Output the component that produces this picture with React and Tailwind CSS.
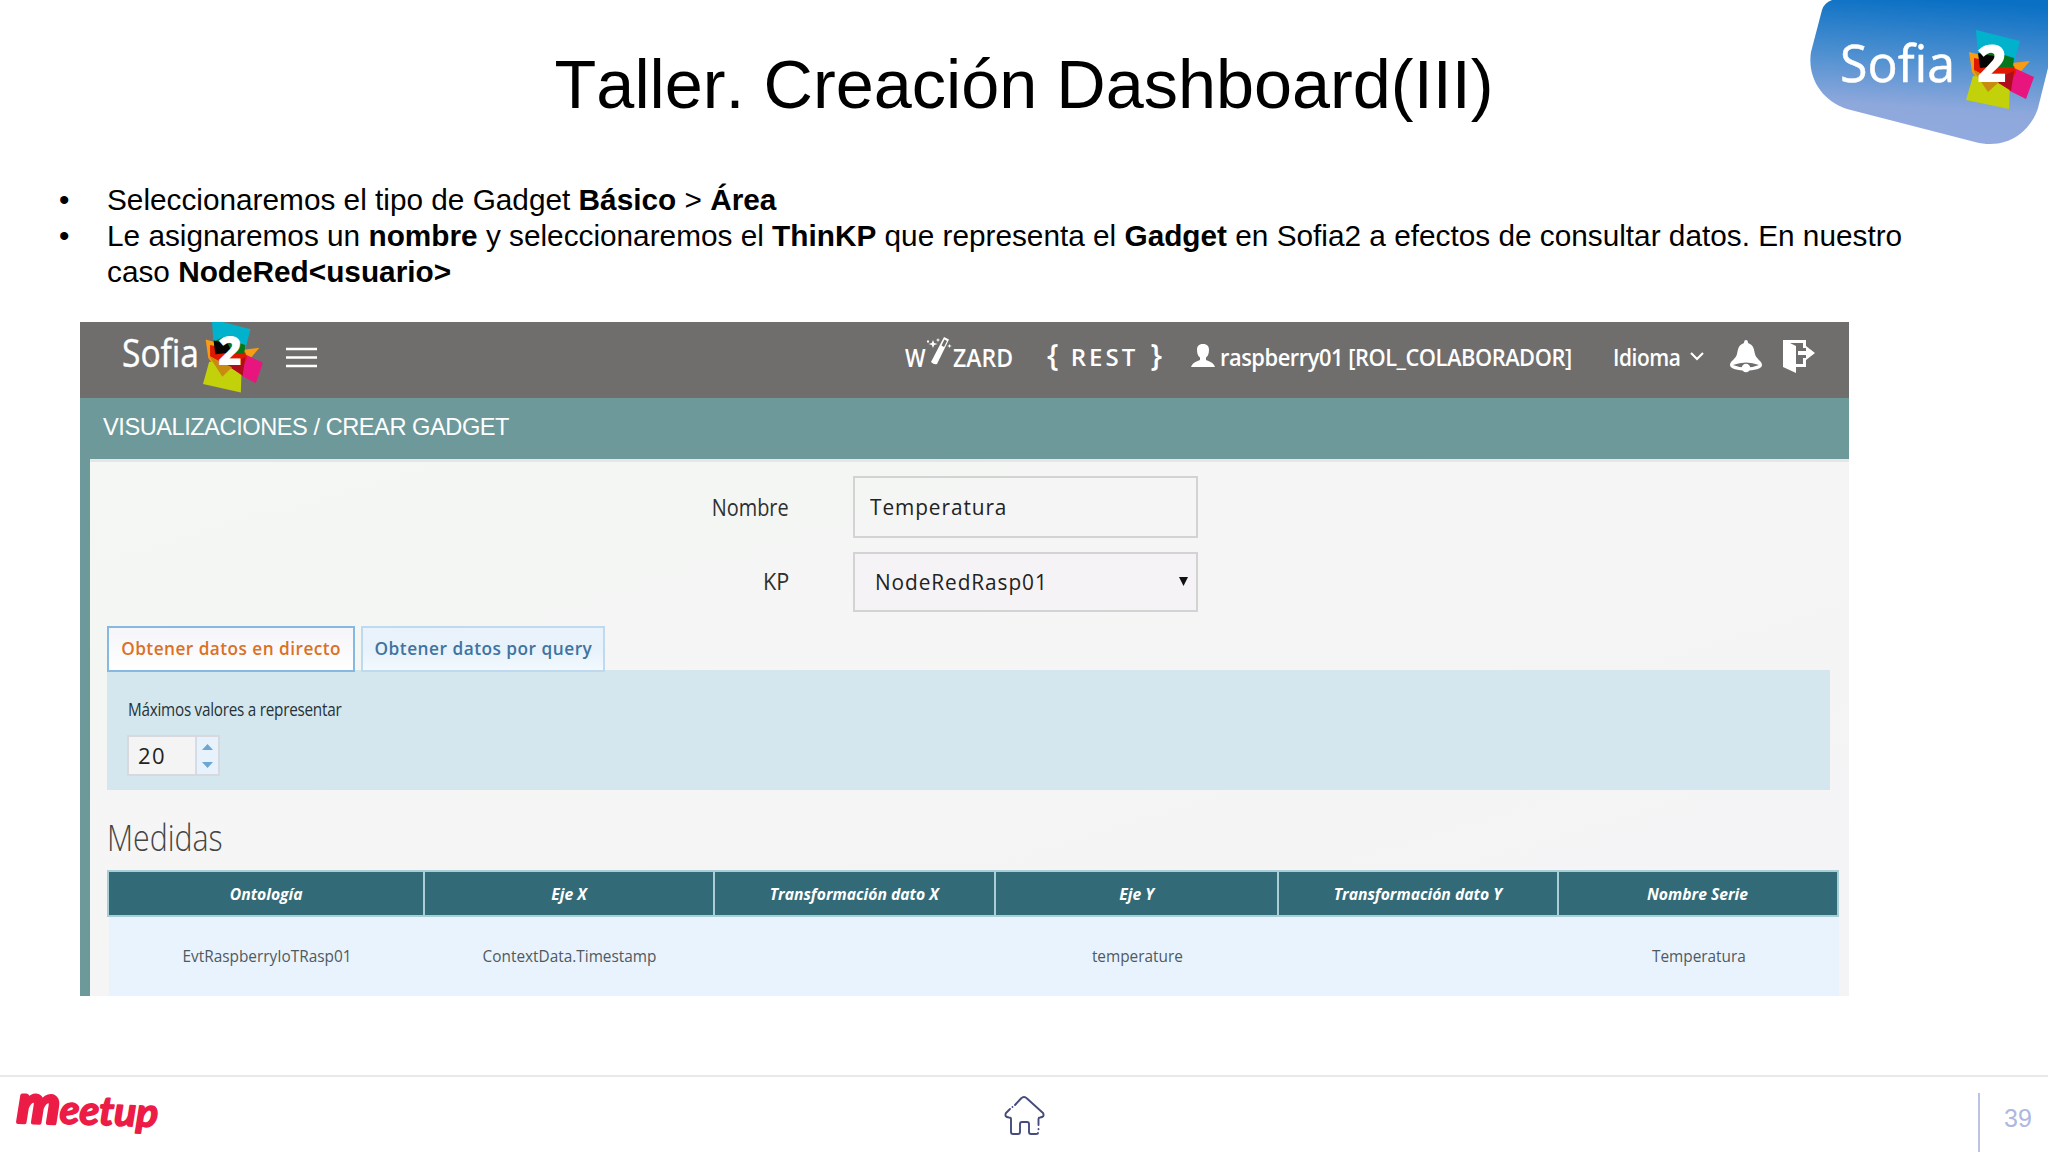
const columns = [
  { title: 'Ontología', value: 'EvtRaspberryIoTRasp01', width: 'w-[316px]' },
  { title: 'Eje X', value: 'ContextData.Timestamp', width: 'w-[290px]' },
  { title: 'Transformación dato X', value: '', width: 'w-[281px]' },
  { title: 'Eje Y', value: 'temperature', width: 'w-[283px]' },
  { title: 'Transformación dato Y', value: '', width: 'w-[280px]' },
  { title: 'Nombre Serie', value: 'Temperatura', width: 'w-[280px]' },
];

// Overlapping coloured sheets behind the "2"
function Sheets() {
  return (
    <g>
      <path d="M10 0 L54 11 L47 36 L12 27 Z" fill="#00b2cc" />
      <path d="M3 22 L46 33 L64 31 L50 47 L22 62 L6 42 Z" fill="#f79c14" />
      <path d="M46 37 L68 47 L60 69 L36 57 Z" fill="#e8157f" />
      <path d="M7 46 L44 49 L43 79 L0 70 Z" fill="#c3d10b" />
      <path d="M8 28 L48 36 L50 42 L42 58 L8 40 Z" fill="#e01800" />
      <path d="M28 50 L48 41 L45 61 Z" fill="#b00d1c" />
      <path d="M7 40 L33 52 L22 62 Z" fill="#c98a10" />
      <path d="M13 24 L22 20 L48 28 L47 37 L16 37 Z" fill="#05761c" />
      <path d="M12 23 L28 26 L33 36 L14 38 Z" fill="#060503" />
    </g>
  );
}

function CornerLogo() {
  return (
    <svg width="238" height="146" viewBox="0 0 238 146" className="absolute right-0 top-0">
      <defs>
        <linearGradient id="corner" x1="0.55" y1="0" x2="0.45" y2="1">
          <stop offset="0" stopColor="#0a70c4" />
          <stop offset="0.4" stopColor="#4c8fd0" />
          <stop offset="0.75" stopColor="#8ea8dc" />
          <stop offset="1" stopColor="#92aadf" />
        </linearGradient>
      </defs>
      <path d="M22 0 Q14 3 12 10 L1 52 C-3 78 12 101 37 109 L165 142 C200 151 222 128 228 108 L238 68 V0 Z" fill="url(#corner)" />
      <text x="30" y="82" textLength="115" lengthAdjust="spacingAndGlyphs" fontSize="52" fill="#fff" stroke="#fff" strokeWidth=".5" fontFamily="'Open Sans', sans-serif">Sofia</text>
      <g transform="translate(156 30)">
        <Sheets />
      </g>
      <text x="167" y="82" textLength="30" lengthAdjust="spacingAndGlyphs" fontSize="52" fontWeight="800" fill="#fff" fontFamily="'Open Sans', sans-serif">2</text>
    </svg>
  );
}

function AppLogo() {
  return (
    <svg width="150" height="76" viewBox="0 0 150 76" className="shrink-0">
      <text x="0" y="45" textLength="77" lengthAdjust="spacingAndGlyphs" fontSize="39" fill="#fff" stroke="#fff" strokeWidth=".4" fontFamily="'Open Sans', sans-serif">Sofia</text>
      <g transform="translate(81 -3) scale(.88 .93)">
        <Sheets />
      </g>
      <text x="96" y="43" textLength="24" lengthAdjust="spacingAndGlyphs" fontSize="40" fontWeight="800" fill="#fff" fontFamily="'Open Sans', sans-serif">2</text>
    </svg>
  );
}

function Wand() {
  return (
    <svg width="27" height="30" viewBox="0 0 27 30" className="shrink-0">
      <path d="M18 1 L23 3.5 L11 28 Q8 29 5 26 Z" fill="#fff" />
      <path d="M18.4 3.5 L21 5 L18 11 L15.5 9.5 Z" fill="#6f6e6d" />
      <path d="M7 4 L8.2 7 L11.5 8 L8.2 9 L7 12 L5.8 9 L2.5 8 L5.8 7 Z M12 2 L12.6 3.5 L14.3 4 L12.6 4.6 L12 6.2 L11.4 4.6 L9.7 4 L11.4 3.5 Z M1 4.5 h2 v2 h-2 Z M23.5 8 L24.2 9.5 L26 10 L24.2 10.5 L23.5 12 L22.8 10.5 L21 10 L22.8 9.5 Z" fill="#fff" />
    </svg>
  );
}

function TopBar() {
  return (
    <div className="flex h-[76px] items-start bg-[#6f6e6d] pl-[42px] text-white">
      <AppLogo />
      <svg width="31" height="22" viewBox="0 0 31 22" className="ml-[14px] mt-[25px] shrink-0" stroke="#fff" strokeWidth="2.6">
        <path d="M0 2H31M0 10.5H31M0 19H31" />
      </svg>
      <div className="ml-[588px] mt-[15px] flex h-10 w-[109px] shrink-0 items-start">
        <span className="w-[21px] origin-left scale-x-[.87] text-[25px] font-semibold leading-10">W</span>
        <div className="-mt-px">
          <Wand />
        </div>
        <span className="w-[61px] origin-left scale-x-[.92] text-[25px] font-semibold leading-10">ZARD</span>
      </div>
      <div className="ml-[33px] mt-[15px] flex h-10 w-[115px] shrink-0 justify-between">
        <span className="text-[30px] font-semibold leading-9">{'{'}</span>
        <span className="text-[24px] font-semibold leading-10 tracking-[3px]">REST</span>
        <span className="text-[30px] font-semibold leading-9">{'}'}</span>
      </div>
      <svg width="26" height="25" viewBox="0 0 26 25" className="ml-[28px] mt-[21px] shrink-0" fill="#fff">
        <path d="M13 1 C17.5 1 19 3.5 19 7 C19 11 17.5 13.5 16 14.5 V17 Q24 19.5 25 24 H1 Q2 19.5 10 17 V14.5 C8.5 13.5 7 11 7 7 C7 3.5 8.5 1 13 1 Z" />
      </svg>
      <div className="ml-[4px] mt-[15px] h-10 w-[352px] shrink-0">
        <span className="inline-block origin-left scale-x-[.91] whitespace-nowrap text-[24px] font-semibold leading-10 tracking-[-0.5px]">raspberry01 [ROL_COLABORADOR]</span>
      </div>
      <div className="ml-[41px] mt-[15px] h-10 w-[68px] shrink-0">
        <span className="inline-block origin-left scale-x-[.87] text-[24px] font-semibold leading-10 tracking-[-0.5px]">Idioma</span>
      </div>
      <svg width="14" height="9" viewBox="0 0 14 9" className="ml-[9px] mt-[30px] shrink-0" fill="none" stroke="#fff" strokeWidth="2.2">
        <path d="M1 1 L7 7 L13 1" />
      </svg>
      <svg width="34" height="33" viewBox="0 0 34 33" className="ml-[25px] mt-[18px] shrink-0">
        <path d="M17 0 Q19 0 19 3 C25 5 25 10 26 14 C27 19 33 21 33 25 C33 29 25 30.5 17 30.5 C9 30.5 1 29 1 25 C1 21 7 19 8 14 C9 10 9 5 15 3 Q15 0 17 0 Z" fill="#fff" />
        <path d="M4 25 Q17 20 30 25 Q17 30 4 25 Z" fill="#6f6e6d" />
        <circle cx="17" cy="28" r="4.2" fill="#fff" />
      </svg>
      <svg width="34" height="33" viewBox="0 0 34 33" className="ml-[19px] mt-[18px] shrink-0" fill="#fff">
        <path d="M1 0 H24 V8 H21 V3 H8 L14 6 V24 H21 V18 H24 V27 H14 V33 L1 27 Z" />
        <path d="M16 11 H24 V6 L33 13 L24 20 V15 H16 Z" />
      </svg>
    </div>
  );
}

function GadgetForm() {
  return (
    <div className="flex flex-col gap-[14px] pt-[14px] text-[#303030]">
      <div className="flex h-[62px] items-center">
        <div className="w-[699px] pb-px text-right">
          <span className="inline-block origin-right scale-x-[.83] text-[24px] leading-8">Nombre</span>
        </div>
        <div className="ml-[64px] flex h-[62px] w-[345px] items-center border-2 border-[#d2d3d2] pl-[15px] text-[22.5px] tracking-[1px] text-[#222]">
          <span className="inline-block origin-left scale-x-[.925]">Temperatura</span>
        </div>
      </div>
      <div className="flex h-[60px] items-center">
        <div className="w-[699px] pb-[3px] text-right">
          <span className="inline-block origin-right scale-x-[.9] text-[24px] leading-8">KP</span>
        </div>
        <div className="ml-[64px] flex h-[60px] w-[345px] items-center justify-between border-2 border-[#d2d3d2] bg-[#f5f3f5] pb-px pl-[20px] pr-[8px] text-[22.5px] tracking-[1px] text-[#222]">
          <span className="inline-block origin-left scale-x-[.925]">NodeRedRasp01</span>
          <svg width="9" height="9" viewBox="0 0 9 9">
            <path d="M0 0H9L4.5 9Z" fill="#111" />
          </svg>
        </div>
      </div>
    </div>
  );
}

function LiveData() {
  return (
    <div className="mt-[14px]">
      <div className="relative flex h-[44px] gap-[6px]">
        <div className="flex h-[46px] w-[248px] items-center justify-center border-2 border-[#86b9e2] bg-gradient-to-b from-[#f5f5fa] to-white pb-[2px] text-[18px] font-semibold tracking-[.5px] text-[#dc7024]">
          <span className="inline-block scale-x-[.955] whitespace-nowrap">Obtener datos en directo</span>
        </div>
        <div className="flex h-[46px] w-[244px] items-center justify-center border-2 border-[#bfdaee] bg-gradient-to-b from-[#eaf3fb] via-[#e8f2fb] to-[#f2f9ff] pb-[2px] text-[18px] font-semibold tracking-[.5px] text-[#3f73a1]">
          <span className="inline-block scale-x-[.96] whitespace-nowrap">Obtener datos por query</span>
        </div>
      </div>
      <div className="h-[120px] w-[1723px] bg-[#d4e7ee] pl-[20px] pt-[27px]">
        <p className="ml-px w-[400px] origin-left scale-x-[.825] text-[18.5px] leading-6 tracking-[-0.3px] text-[#253238]">Máximos valores a representar</p>
        <div className="mt-[14px] flex h-[41px] w-[93px] border-2 border-[#d8d9df] bg-[#f5f4f5]">
          <div className="flex w-[66px] items-center pb-px pl-[9px] text-[22px] tracking-[1.5px] text-[#222]">20</div>
          <div className="flex flex-1 flex-col items-center justify-center gap-[12px] border-l-2 border-[#d5dce8] bg-[#e8f2fd]">
            <svg width="11" height="6" viewBox="0 0 11 6"><path d="M0 6L5.5 0L11 6Z" fill="#6da6d3" /></svg>
            <svg width="11" height="6" viewBox="0 0 11 6"><path d="M0 0H11L5.5 6Z" fill="#6da6d3" /></svg>
          </div>
        </div>
      </div>
    </div>
  );
}

function Measures() {
  return (
    <div>
      <h2 className="mt-[22px] h-[58px] w-[200px] origin-left scale-x-[.84] text-[36px] font-light leading-[52px] text-[#444]">Medidas</h2>
      <div className="flex w-[1731px]">
        <div className="h-[47px] w-[2px] shrink-0 bg-[#a9ced6]" />
        {columns.map((col) => (
          <div key={col.title} className={`${col.width} shrink-0`}>
            <div className="flex h-[47px] items-center justify-center border-y-2 border-r-2 border-[#a9ced6] bg-[#326b77] text-white">
              <span className="inline-block scale-x-[.98] whitespace-nowrap text-[16px] font-bold italic">{col.title}</span>
            </div>
            <div className="flex h-[80px] items-center justify-center bg-[#e9f3fd] pb-[2px] text-[#4f5a5f]">
              <span className="inline-block scale-x-[.96] whitespace-nowrap text-[16px] font-medium">{col.value}</span>
            </div>
          </div>
        ))}
      </div>
    </div>
  );
}

function Meetup() {
  return (
    <svg width="170" height="90" viewBox="0 0 170 90" className="-mb-4 -mt-4 ml-[6px]" fill="#ec1c46" stroke="#ec1c46" strokeLinejoin="round" fontFamily="Lato, sans-serif" fontWeight="700" fontStyle="italic">
      <text x="11" y="61" transform="rotate(2 11 61)" textLength="141" lengthAdjust="spacingAndGlyphs" fontSize="40" strokeWidth="1.6">
        <tspan fontSize="52" strokeWidth="4">m</tspan>eetup
      </text>
    </svg>
  );
}

function Footer() {
  return (
    <footer className="flex h-[77px] items-start border-t-2 border-[#e8e9e9]">
      <div className="w-[1004px]">
        <Meetup />
      </div>
      <svg width="41" height="41" viewBox="0 0 41 41" className="mt-[18px]" fill="none" stroke="#454c7c" strokeWidth="1.9" strokeLinecap="round" strokeLinejoin="round">
        <path d="M11 10 L17 3.5 Q20 .5 23 3.5 L39 18 Q41 22 36 22.5 Q34.5 22.5 34.5 24 V30 M34.5 34 V34.2 M34 38 Q34 39 32 39 H27 Q25 39 25 37 V29 Q25 27 23 27 H18 Q16 27 16 29 V37 Q16 39 14 39 H9 Q7 39 7 37 V24 Q7 22.5 5 22.5 Q0 22 2 18 L6 14 M8.5 12 V12.1" />
      </svg>
      <div className="ml-[933px] mt-[16px] h-[59px] border-l-2 border-[#bcc3e3] pl-[24px] pt-[5px] font-['Liberation_Sans',sans-serif] text-[25px] leading-[40px] text-[#aeb8df]">39</div>
    </footer>
  );
}

export default function App() {
  return (
    <div className="relative flex h-[1152px] w-[2048px] flex-col overflow-hidden bg-white font-['Open_Sans',sans-serif]">
      <CornerLogo />
      <h1 className="pt-[40px] text-center font-['Liberation_Sans',sans-serif] text-[68.4px] leading-[88px] text-black [font-kerning:none]">Taller. Creación Dashboard(III)</h1>
      <ul className="mt-[54px] h-[140px] pl-[107px] font-['Liberation_Sans',sans-serif] text-[29.77px] leading-[36px] text-black">
        <li className="relative">
          <span className="absolute -left-[48px]">•</span>
          Seleccionaremos el tipo de Gadget <b>Básico</b> &gt; <b>Área</b>
        </li>
        <li className="relative whitespace-nowrap">
          <span className="absolute -left-[48px]">•</span>
          Le asignaremos un <b>nombre</b> y seleccionaremos el <b>ThinKP</b> que representa el <b>Gadget</b> en Sofia2 a efectos de consultar datos. En nuestro
          <br />
          caso <b>NodeRed&lt;usuario&gt;</b>
        </li>
      </ul>

      <section className="ml-[80px] h-[674px] w-[1769px] overflow-hidden">
        <TopBar />
        <div className="h-[61px] bg-[#6d999b] pl-[23px] font-['Liberation_Sans',sans-serif] text-[23.6px] leading-[58px] tracking-[-0.45px] text-white">VISUALIZACIONES / CREAR GADGET</div>
        <div className="h-[537px] border-l-[10px] border-[#6d999b] bg-gradient-to-br from-[#f4f7f3] via-[#f5f5f5] to-[#f4f3f6]">
          <div className="h-[3px] bg-[#e4e7e5]" />
          <GadgetForm />
          <div className="pl-[17px]">
            <LiveData />
            <Measures />
          </div>
        </div>
      </section>

      <div className="mt-auto">
        <Footer />
      </div>
    </div>
  );
}
